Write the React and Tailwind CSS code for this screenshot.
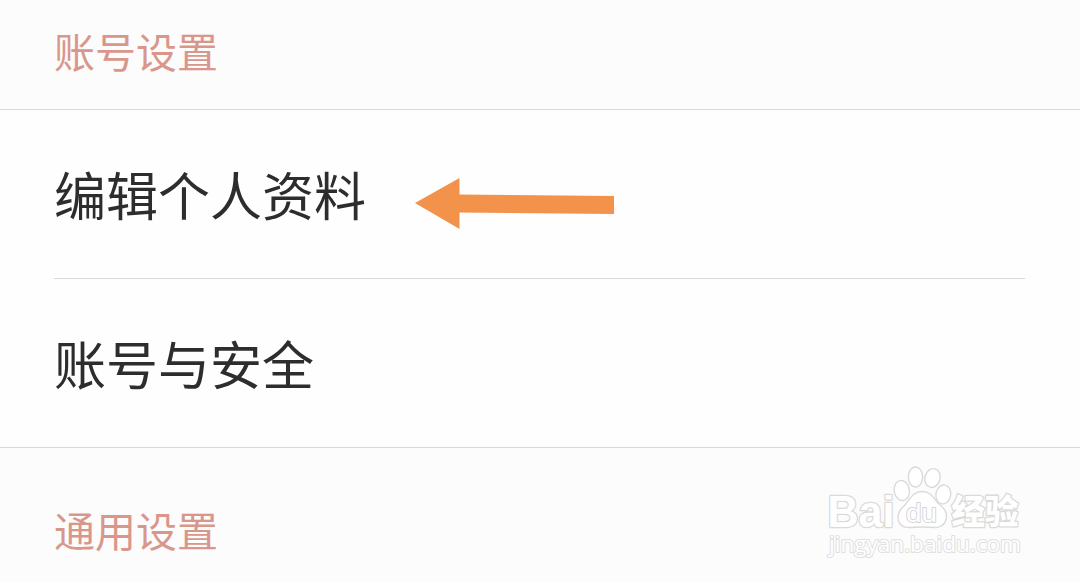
function SectionTitle({ children }) {
  return (
    <h2 className="text-[41px] leading-[60px] font-normal whitespace-nowrap text-[#d9978c]">{children}</h2>
  );
}

function RowLabel({ children }) {
  return (
    <span className="text-[52px] leading-[76px] font-normal whitespace-nowrap text-[#2d2d2d]">{children}</span>
  );
}

function Arrow() {
  return (
    <svg className="mt-[20px] ml-[46px] h-[54px] w-[204px]" viewBox="412 176 204 54" aria-hidden="true">
      <path d="M415 203 L459.5 178 V194.5 L614 196 V214 L459.5 212.500 V229 Z" fill="#f2924b" />
    </svg>
  );
}

function Watermark() {
  return (
    <svg
      className="absolute top-[460px] left-[820px] h-[106px] w-[210px]"
      viewBox="820 460 210 106"
      fill="#fff"
      stroke="#dadada"
      strokeWidth="1.4"
      strokeLinejoin="round"
      fontFamily="'Liberation Sans', 'Noto Sans CJK SC', sans-serif"
      aria-hidden="true"
    >
      <ellipse cx="915.500" cy="477" rx="7.200" ry="10" />
      <ellipse cx="932.500" cy="478" rx="7.600" ry="9.500" transform="rotate(15 932.5 478)" />
      <ellipse cx="901.800" cy="490.500" rx="7.600" ry="10" transform="rotate(-10 901.8 490.5)" />
      <ellipse cx="943.300" cy="494.500" rx="7.400" ry="9.500" transform="rotate(10 943.3 494.5)" />
      <path d="M922 491.500 C912 491.500 910 500 904 506 C898 511 896.500 518 899.500 523 C903 529.500 911 527 922 527 C933 527 940 529.500 944.500 523 C948 517 947 510 940 505 C934 500 932 491.500 922 491.500 Z" />
      <g fontWeight="700" paintOrder="stroke" strokeWidth="2.600">
        <text x="827.500" y="526.500" fontSize="45" textLength="67" lengthAdjust="spacingAndGlyphs">Bai</text>
        <text x="951.500" y="524" fontSize="34" fontWeight="900" fontFamily="'Noto Sans CJK SC', sans-serif" textLength="67" lengthAdjust="spacingAndGlyphs">经验</text>
      </g>
      <text x="906" y="521.500" fontSize="26" strokeWidth="1.800" paintOrder="stroke" stroke="#d4d4d4" textLength="31" lengthAdjust="spacingAndGlyphs">du</text>
      <text x="829" y="552" fontSize="22" fontWeight="500" fontFamily="'Open Sans', sans-serif" paintOrder="stroke" strokeWidth="2" stroke="#e0e0e0" textLength="192" lengthAdjust="spacingAndGlyphs">jingyan.baidu.com</text>
    </svg>
  );
}

export default function App() {
  return (
    <main className="relative flex h-[582px] w-[1080px] flex-col overflow-hidden bg-[#fcfcfc] font-['Noto_Sans_CJK_SC',sans-serif]">
      <header className="h-[109px] shrink-0 pt-[20px] pl-[54px]">
        <SectionTitle>账号设置</SectionTitle>
      </header>
      <section className="h-[339px] shrink-0 border-y border-[#d9d9d9] bg-[#fefefe] px-[54px]">
        <div className="flex h-[169px] w-[971px] items-start border-b border-[#d9d9d9] pt-[46px]">
          <RowLabel>编辑个人资料</RowLabel>
          <Arrow />
        </div>
        <div className="flex h-[168px] items-start pt-[46px]">
          <RowLabel>账号与安全</RowLabel>
        </div>
      </section>
      <footer className="flex-1 pt-[51px] pl-[54px]">
        <SectionTitle>通用设置</SectionTitle>
      </footer>
      <Watermark />
    </main>
  );
}
